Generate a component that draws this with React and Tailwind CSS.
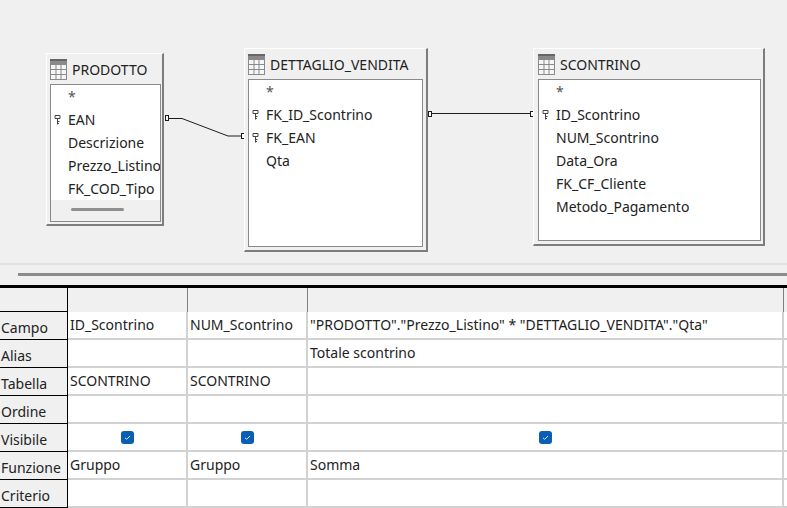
const font = { fontFamily: '"Noto Sans", "Open Sans", sans-serif' };

function TableIcon() {
  return (
    <svg width="17" height="21" viewBox="0 0 17 21" className="shrink-0">
      <rect x="0" y="0" width="17" height="21" fill="#8a8a8a" />
      <rect x="0" y="0" width="17" height="2" fill="#666" />
      <rect x="1" y="6" width="15" height="14" fill="#f6f6f6" />
      <path d="M6 6v14M11 6v14M1 10.500h15M1 15.500h15" stroke="#8a8a8a" strokeWidth="1" fill="none" />
    </svg>
  );
}

function KeyIcon() {
  return (
    <svg width="7" height="10" viewBox="0 0 7 10" className="shrink-0">
      <path d="M1 .5h5v3H1zM3.500 3.500v6M3.500 6.500h2M3.500 8.500h1.500" stroke="#444" strokeWidth="1" fill="none" />
    </svg>
  );
}

function TableWindow({ name, fields, box, list, scroll }) {
  return (
    <div className={`absolute flex flex-col bg-[#f0f0f0] border-t border-l border-t-white border-l-white border-r-2 border-b-2 border-r-[#7d7d7d] border-b-[#7d7d7d] ${box}`}>
      <div className="flex items-center gap-[5px] h-[30px] shrink-0 text-[14px] text-[#222] whitespace-nowrap">
        <TableIcon />
        <span>{name}</span>
      </div>
      <div className={`relative flex flex-col bg-white border border-[#8a8a8a] overflow-hidden ${list}`}>
        <div className="flex flex-col flex-1 min-h-0">
          {fields.map((f) => (
            <div key={f.label} className="flex items-center h-[23px] shrink-0 text-[14px] text-[#222] whitespace-nowrap">
              <span className="flex w-[17px] pl-[3px] shrink-0 justify-start">{f.key ? <KeyIcon /> : null}</span>
              <span className={f.label === "*" ? "text-[#555]" : ""}>{f.label}</span>
            </div>
          ))}
        </div>
        {scroll ? (
          <div className="h-[21px] shrink-0 bg-[#f0f0f0] flex items-center pl-[20px] pb-[2px]">
            <div className="w-[53px] h-[3px] bg-[#8f8f8f] rounded-sm" />
          </div>
        ) : null}
      </div>
    </div>
  );
}

// connector lines between the table windows
function Relations() {
  const ends = [
    [165.5, 115.5],
    [241.5, 133.5],
    [428.5, 111.5],
    [530.5, 111.5],
  ];
  return (
    <svg className="absolute left-0 top-0" width="787" height="262">
      <path d="M168 118.500h14l46 17.500h14" stroke="#1c1c1c" strokeWidth="1" fill="none" />
      <path d="M431 113.500h100" stroke="#1c1c1c" strokeWidth="1" fill="none" />
      {ends.map(([x, y]) => (
        <rect key={x} x={x} y={y} width="3" height="5" fill="#fff" stroke="#1c1c1c" strokeWidth="1" />
      ))}
    </svg>
  );
}

function Check() {
  return (
    <span className="w-[13px] h-[13px] rounded-[3px] bg-[#0a5fb4] flex items-center justify-center">
      <svg width="9" height="9" viewBox="0 0 9 9">
        <path d="M2 4.800l1.700 1.500L7 3" stroke="#dbe9f7" strokeWidth="1" fill="none" />
      </svg>
    </span>
  );
}

const rows = [
  { label: "Campo", cells: ["ID_Scontrino", "NUM_Scontrino", '"PRODOTTO"."Prezzo_Listino" * "DETTAGLIO_VENDITA"."Qta"'] },
  { label: "Alias", cells: ["", "", "Totale scontrino"] },
  { label: "Tabella", cells: ["SCONTRINO", "SCONTRINO", ""] },
  { label: "Ordine", cells: ["", "", ""] },
  { label: "Visibile", check: true },
  { label: "Funzione", cells: ["Gruppo", "Gruppo", "Somma"] },
  { label: "Criterio", cells: ["", "", ""] },
];

function Row({ row }) {
  const cols = ["w-[120px]", "w-[120px]", "w-[476px]"];
  return (
    <div className="flex h-[28px]">
      <div className="w-[68px] shrink-0 bg-[#f0f0f0] border-r border-b border-r-black border-b-black text-[14px] text-[#222] pl-px pt-[4px] leading-[24px]">
        {row.label}
      </div>
      {cols.map((c, i) => (
        <div key={c + i} className={`${c} shrink-0 bg-white border-r-2 border-b-2 border-r-[#d2d2d2] border-b-[#d2d2d2] text-[14px] text-[#222] pl-[2px] pt-px leading-[24px] whitespace-nowrap overflow-hidden`}>
          {row.check ? (
            <div className="h-full flex items-center justify-center pr-[2px]"><Check /></div>
          ) : (
            row.cells[i]
          )}
        </div>
      ))}
      <div className="flex-1 bg-white border-b-2 border-b-[#d2d2d2]" />
    </div>
  );
}

export default function App() {
  return (
    <div style={font} className="w-[787px] h-[508px] overflow-hidden bg-[#f0f0f0] flex flex-col">
      <div className="relative h-[263px] shrink-0">
        <Relations />
        <TableWindow
          name="PRODOTTO"
          box="left-[46px] top-[53px] w-[118px] h-[173px] pl-[3px] pr-[2px] pb-[2px]"
          list="h-[138px] w-[111px]"
          scroll
          fields={[
            { label: "*" },
            { label: "EAN", key: true },
            { label: "Descrizione" },
            { label: "Prezzo_Listino" },
            { label: "FK_COD_Tipo" },
          ]}
        />
        <TableWindow
          name="DETTAGLIO_VENDITA"
          box="left-[244px] top-[48px] w-[184px] h-[204px] pl-[3px] pr-[2px] pb-[2px]"
          list="h-[168px] w-[175px]"
          fields={[
            { label: "*" },
            { label: "FK_ID_Scontrino", key: true },
            { label: "FK_EAN", key: true },
            { label: "Qta" },
          ]}
        />
        <TableWindow
          name="SCONTRINO"
          box="left-[533px] top-[48px] w-[232px] h-[198px] pl-[4px] pr-[2px] pb-[2px]"
          list="h-[162px] w-[223px]"
          fields={[
            { label: "*" },
            { label: "ID_Scontrino", key: true },
            { label: "NUM_Scontrino" },
            { label: "Data_Ora" },
            { label: "FK_CF_Cliente" },
            { label: "Metodo_Pagamento" },
          ]}
        />
      </div>

      <div className="h-[22px] shrink-0 border-t-2 border-t-[#e3e3e3] pl-[18px] pt-[8px]">
        <div className="h-[3px] bg-[#8c8c8c]" />
      </div>

      <div className="flex-1 flex flex-col border-t-[3px] border-t-black">
        <div className="flex h-[24px] shrink-0 bg-[#f0f0f0]">
          <div className="w-[68px] border-r border-r-black border-b border-b-black" />
          <div className="w-[120px] border-r border-r-[#7f7f7f]" />
          <div className="w-[120px] border-r border-r-[#7f7f7f]" />
          <div className="w-[476px] border-r border-r-[#7f7f7f]" />
        </div>
        {rows.map((r) => (
          <Row key={r.label} row={r} />
        ))}
      </div>
    </div>
  );
}
